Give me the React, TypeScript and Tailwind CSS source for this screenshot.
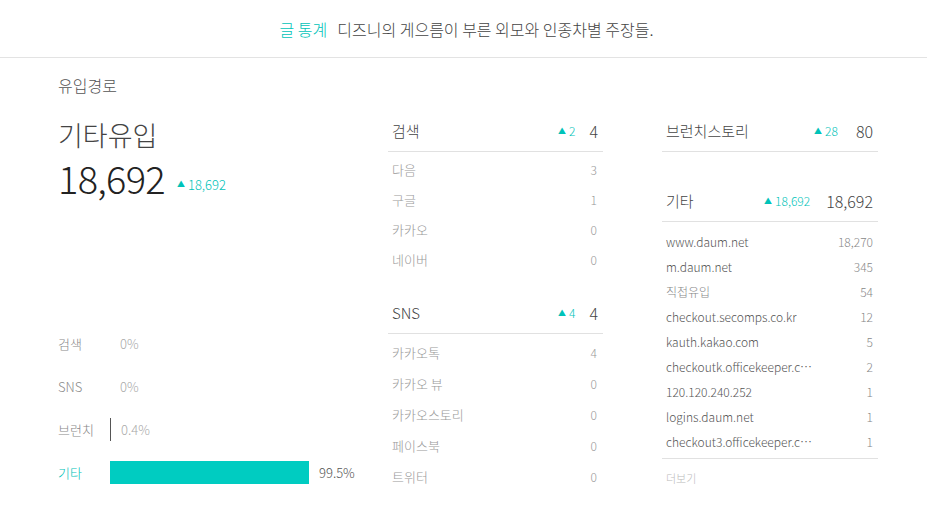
import React from 'react'

const teal = 'text-[#00c3b9]'

const searchRows = [
  { name: '다음', value: 3 },
  { name: '구글', value: 1 },
  { name: '카카오', value: 0 },
  { name: '네이버', value: 0 },
]

const snsRows = [
  { name: '카카오톡', value: 4 },
  { name: '카카오 뷰', value: 0 },
  { name: '카카오스토리', value: 0 },
  { name: '페이스북', value: 0 },
  { name: '트위터', value: 0 },
]

const etcRows = [
  { name: 'www.daum.net', value: '18,270' },
  { name: 'm.daum.net', value: '345' },
  { name: '직접유입', value: '54', light: true },
  { name: 'checkout.secomps.co.kr', value: '12' },
  { name: 'kauth.kakao.com', value: '5' },
  { name: 'checkoutk.officekeeper.co.kr', value: '2' },
  { name: '120.120.240.252', value: '1' },
  { name: 'logins.daum.net', value: '1' },
  { name: 'checkout3.officekeeper.co.kr', value: '1' },
]

const bars = [
  { name: '검색', pct: 0, label: '0%' },
  { name: 'SNS', pct: 0, label: '0%' },
  { name: '브런치', pct: 0.4, label: '0.4%' },
  { name: '기타', pct: 99.5, label: '99.5%', active: true },
]

function Delta({ value, size = 'text-[12px]' }: { value: string; size?: string }) {
  return (
    <span className={`flex items-center gap-[3px] ${size} ${teal}`}>
      <span className="text-[8px] leading-none">▲</span>
      {value}
    </span>
  )
}

function GroupHeader({ title, delta, total, gap = 'gap-[14px]' }: { title: string; delta: string; total: string; gap?: string }) {
  return (
    <div className="flex items-center justify-between h-[41px] px-[4px] pr-[5px] border-b border-[#e1e1e1]">
      <span className="text-[15px] text-[#444]">{title}</span>
      <div className={`flex items-center ${gap}`}>
        <Delta value={delta} />
        <span className="text-[16px] text-[#444]">{total}</span>
      </div>
    </div>
  )
}

export default function App() {
  return (
    <div className="w-[927px] h-[523px] bg-white overflow-hidden font-['Noto_Sans_CJK_KR','Noto_Sans',sans-serif] font-light">
      <div className="h-[58px] border-b border-[#e3e3e3] flex items-center justify-center pt-[1px] pl-[6px] text-[16px]">
        <span className={teal}>글 통계</span>
        <span className="ml-[10px] text-[#444]">디즈니의 게으름이 부른 외모와 인종차별 주장들.</span>
      </div>

      <div className="flex pl-[58px]">
        <div className="w-[330px] flex flex-col">
          <div className="pt-[15px] text-[16px] text-[#555] leading-[24px]">유입경로</div>
          <div className="mt-[23px] text-[27px] text-[#444] leading-[30px]">기타유입</div>
          <div className="flex items-end mt-[6px]">
            <span className="text-[38px] text-[#222] leading-[44px] tracking-[-0.7px]">18,692</span>
            <span className="ml-[12px] mb-[6px]">
              <Delta value="18,692" size="text-[13px]" />
            </span>
          </div>
          <div className="mt-[132px] flex flex-col gap-[20px]">
            {bars.map((b) => (
              <div key={b.name} className="flex items-center h-[23px]">
                <span className={`w-[52px] text-[13px] ${b.active ? teal : 'text-[#888]'}`}>{b.name}</span>
                {b.pct > 0 && (
                  <div
                    className={`h-[23px] ${b.active ? 'bg-[#00ccc1]' : 'bg-[#555]'}`}
                    style={{ width: Math.max(1, b.pct * 2) }}
                  />
                )}
                <span className={`ml-[10px] text-[13px] ${b.active ? 'text-[#555]' : 'text-[#aaa]'}`}>{b.label}</span>
              </div>
            ))}
          </div>
        </div>

        <div className="w-[215px] flex flex-col pt-[53px]">
          <GroupHeader title="검색" delta="2" total="4" />
          <div className="flex flex-col pt-[3px]">
            {searchRows.map((r) => (
              <div key={r.name} className="flex justify-between items-center h-[30px] px-[4px] pr-[6px]">
                <span className="text-[13px] text-[#999]">{r.name}</span>
                <span className="text-[12px] text-[#999]">{r.value}</span>
              </div>
            ))}
          </div>
          <div className="mt-[18px]">
            <GroupHeader title="SNS" delta="4" total="4" />
          </div>
          <div className="flex flex-col pt-[3px]">
            {snsRows.map((r) => (
              <div key={r.name} className="flex justify-between items-center h-[31px] px-[4px] pr-[6px]">
                <span className="text-[13px] text-[#999]">{r.name}</span>
                <span className="text-[12px] text-[#999]">{r.value}</span>
              </div>
            ))}
          </div>
        </div>

        <div className="w-[216px] ml-[59px] flex flex-col pt-[53px]">
          <GroupHeader title="브런치스토리" delta="28" total="80" gap="gap-[18px]" />
          <div className="mt-[29px]">
            <GroupHeader title="기타" delta="18,692" total="18,692" gap="gap-[16px]" />
          </div>
          <div className="flex flex-col pt-[7px] pb-[4px] border-b border-[#e1e1e1]">
            {etcRows.map((r) => (
              <div key={r.name} className="flex justify-between items-center h-[25px] px-[4px] pr-[5px]">
                <span className={`text-[12px] truncate max-w-[150px] ${r.light ? 'text-[#888]' : 'text-[#555]'}`}>{r.name}</span>
                <span className="text-[12px] text-[#888]">{r.value}</span>
              </div>
            ))}
          </div>
          <div className="px-[4px] pt-[11px] text-[11px] text-[#bbb]">더보기</div>
        </div>
      </div>
    </div>
  )
}
